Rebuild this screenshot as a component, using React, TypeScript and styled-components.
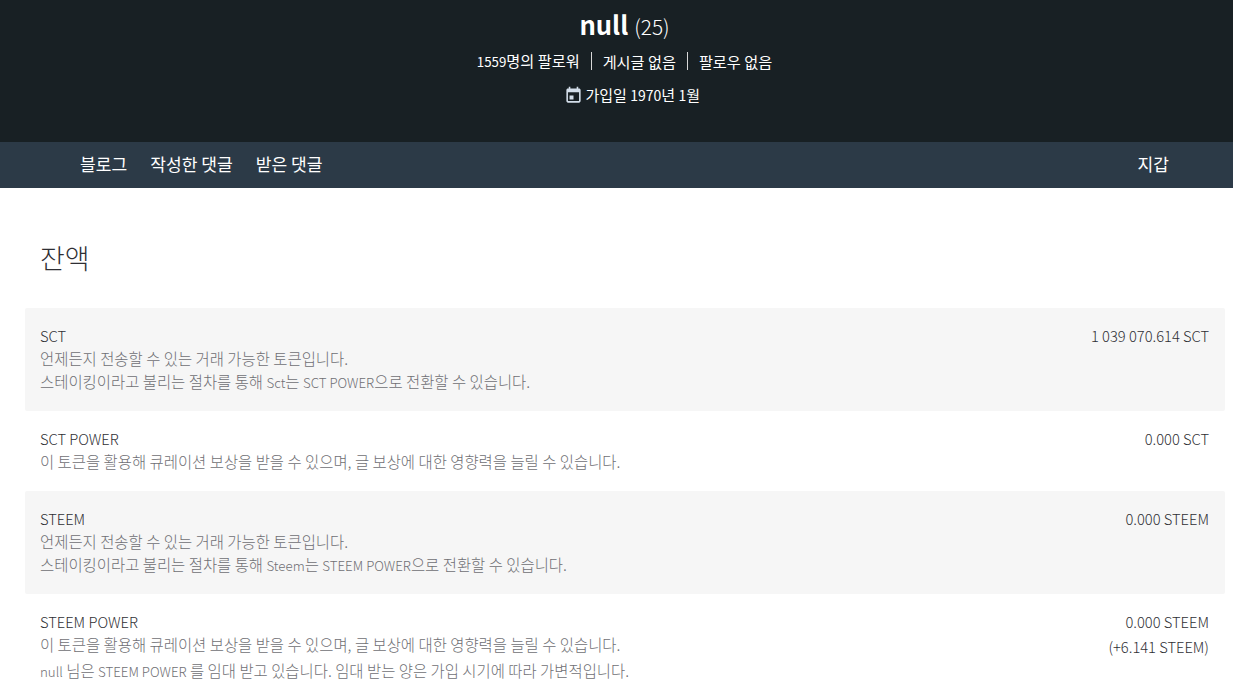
import styled, { createGlobalStyle } from 'styled-components';

const GlobalStyle = createGlobalStyle`
  html, body {
    margin: 0;
    padding: 0;
    background: #fff;
    overflow: hidden;
  }
  body {
    font-family: "Noto Sans CJK KR", "Noto Sans", sans-serif;
    font-size: 14.7px;
    font-weight: 300;
    color: #2f2f34;
  }
`;

const Page = styled.div`
  height: 691px;
  overflow: hidden;
`;

const Hero = styled.header`
  height: 142px;
  padding-left: 16px;
  box-sizing: border-box;
  background: #182024;
  color: #fff;
  text-align: center;
`;

const HeroName = styled.h1`
  margin: 0;
  padding-top: 6px;
  height: 46px;
  font-size: 25.6px;
  line-height: 36px;
  font-weight: 700;
  box-sizing: content-box;
`;

const Reputation = styled.span`
  font-size: 20.8px;
  font-weight: 300;
  margin-left: 6px;
`;

const Stats = styled.div`
  display: flex;
  justify-content: center;
  align-items: center;
  height: 18px;
  font-size: 15.2px;
  font-weight: 400;
  line-height: 18px;
`;

const Stat = styled.span<{ $divided?: boolean }>`
  padding: 0 11px;
  border-left: ${props => (props.$divided ? '1px solid #d8d8d8' : 'none')};
`;

const Joined = styled.div`
  display: flex;
  justify-content: center;
  align-items: center;
  gap: 2.5px;
  height: 18px;
  margin-top: 16px;
  padding-left: 15px;
  font-size: 15px;
  font-weight: 400;
  line-height: 18px;
`;

const Latin = styled.span<{ $size?: number }>`
  font-size: ${props => props.$size ?? 13.3}px;
`;

const Nav = styled.nav`
  display: flex;
  align-items: center;
  justify-content: space-between;
  height: 46px;
  padding: 0 64px 3px 80px;
  box-sizing: border-box;
  background: #2c3a47;
  color: #fff;
  font-size: 17.1px;
  font-weight: 400;
`;

const NavGroup = styled.div`
  display: flex;
  gap: 23px;
`;

const Content = styled.main`
  padding: 0 8px 0 25px;
`;

const Title = styled.h2`
  margin: 0;
  padding: 50px 0 0 15px;
  height: 120px;
  box-sizing: border-box;
  font-size: 27px;
  line-height: 40px;
  font-weight: 300;
`;

const Row = styled.section<{ $shaded?: boolean }>`
  display: flex;
  justify-content: space-between;
  padding: 16px 16px 18px 15px;
  line-height: 23px;
  border-radius: 2px;
  background: ${props => (props.$shaded ? '#f6f6f6' : '#fff')};
`;

const RowInfo = styled.div`
  display: flex;
  flex-direction: column;
`;

const RowName = styled.div`
  height: 23px;
`;

const RowDesc = styled.div<{ $gap?: boolean }>`
  height: 23px;
  font-size: 15.43px;
  color: #6f6f74;
  margin-top: ${props => (props.$gap ? '3px' : '0')};
`;

const RowValues = styled.div`
  display: flex;
  flex-direction: column;
  align-items: flex-end;
  gap: 2px;
  white-space: nowrap;
`;

const CalendarSvg = styled.svg`
  flex: none;
  width: 19px;
  height: 19px;
  fill: #d3deea;
`;

const CalendarIcon = () => (
  <CalendarSvg viewBox="0 0 24 24">
    <path d="M7 12h5v5H7zM16 1v2H8V1H6v2H5c-1.11 0-1.99.9-1.99 2L3 19c0 1.1.89 2 2 2h14c1.1 0 2-.9 2-2V5c0-1.1-.9-2-2-2h-1V1h-2zm3 18H5V8h14v11z" />
  </CalendarSvg>
);

const transferable = '언제든지 전송할 수 있는 거래 가능한 토큰입니다.';
const curation = '이 토큰을 활용해 큐레이션 보상을 받을 수 있으며, 글 보상에 대한 영향력을 늘릴 수 있습니다.';

export default function App() {
  return (
    <Page>
      <GlobalStyle />
      <Hero>
        <HeroName>
          null<Reputation>(25)</Reputation>
        </HeroName>
        <Stats>
          <Stat><Latin>1559</Latin>명의 팔로워</Stat>
          <Stat $divided>게시글 없음</Stat>
          <Stat $divided>팔로우 없음</Stat>
        </Stats>
        <Joined>
          <CalendarIcon />
          <span>가입일 <Latin $size={14}>1970</Latin>년 <Latin $size={14}>1</Latin>월</span>
        </Joined>
      </Hero>
      <Nav>
        <NavGroup>
          <span>블로그</span>
          <span>작성한 댓글</span>
          <span>받은 댓글</span>
        </NavGroup>
        <span>지갑</span>
      </Nav>
      <Content>
        <Title>잔액</Title>
        <Row $shaded>
          <RowInfo>
            <RowName>SCT</RowName>
            <RowDesc>{transferable}</RowDesc>
            <RowDesc>스테이킹이라고 불리는 절차를 통해 <Latin>Sct</Latin>는 <Latin>SCT POWER</Latin>으로 전환할 수 있습니다.</RowDesc>
          </RowInfo>
          <RowValues>1 039 070.614 SCT</RowValues>
        </Row>
        <Row>
          <RowInfo>
            <RowName>SCT POWER</RowName>
            <RowDesc>{curation}</RowDesc>
          </RowInfo>
          <RowValues>0.000 SCT</RowValues>
        </Row>
        <Row $shaded>
          <RowInfo>
            <RowName>STEEM</RowName>
            <RowDesc>{transferable}</RowDesc>
            <RowDesc>스테이킹이라고 불리는 절차를 통해 <Latin>Steem</Latin>는 <Latin>STEEM POWER</Latin>으로 전환할 수 있습니다.</RowDesc>
          </RowInfo>
          <RowValues>0.000 STEEM</RowValues>
        </Row>
        <Row>
          <RowInfo>
            <RowName>STEEM POWER</RowName>
            <RowDesc>{curation}</RowDesc>
            <RowDesc $gap><Latin>null</Latin> 님은 <Latin>STEEM POWER</Latin> 를 임대 받고 있습니다. 임대 받는 양은 가입 시기에 따라 가변적입니다.</RowDesc>
          </RowInfo>
          <RowValues>
            <span>0.000 STEEM</span>
            <span>(+6.141 STEEM)</span>
          </RowValues>
        </Row>
      </Content>
    </Page>
  );
}
